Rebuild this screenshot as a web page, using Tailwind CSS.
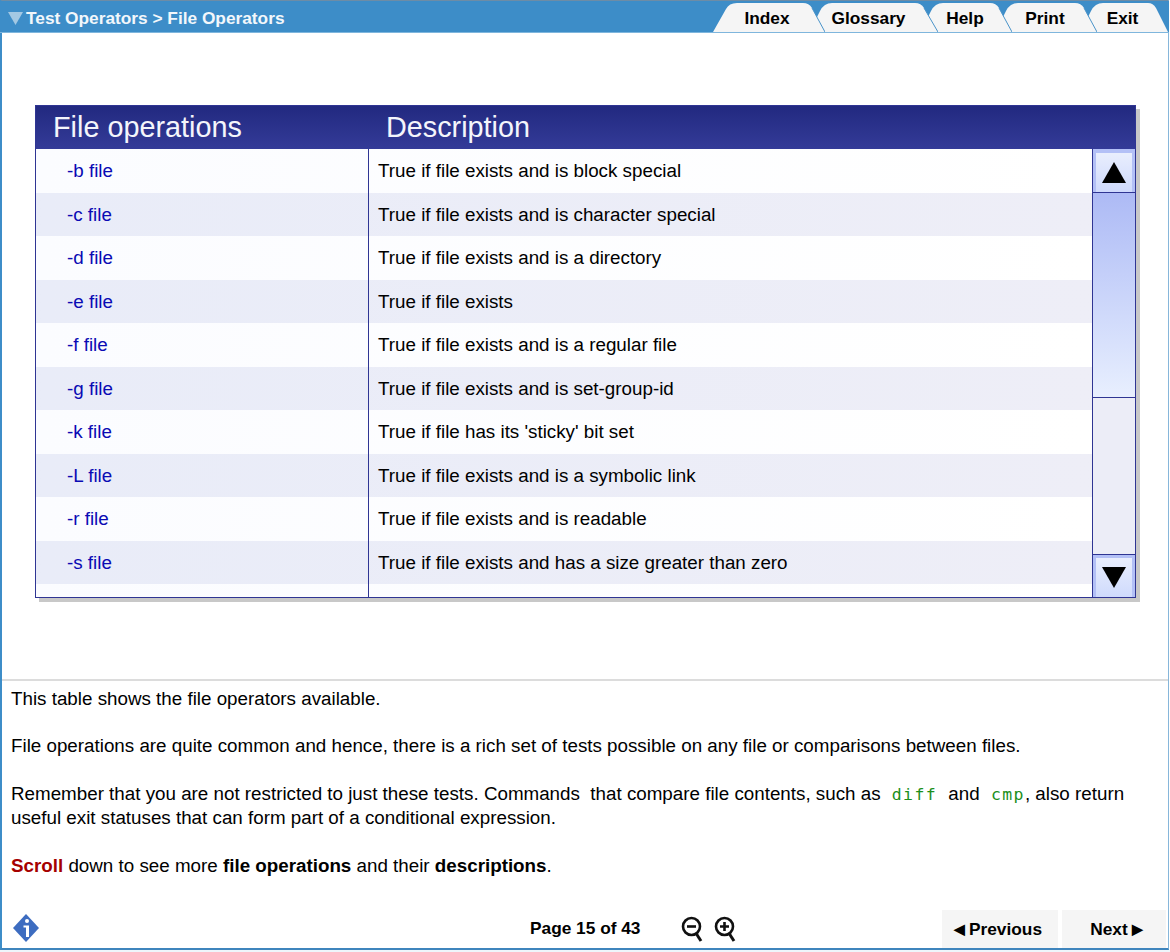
<!DOCTYPE html>
<html lang="en">

<head>
   <meta charset="UTF-8">
   <meta name="viewport" content="width=device-width, initial-scale=1.0">
   <title>File Operators</title>
   <script src="https://cdn.jsdelivr.net/npm/@tailwindcss/browser@4"></script>
</head>

<body class="bg-white font-['Liberation_Sans',Arial,sans-serif] text-black">
   <div class="w-[1170px] h-[952px] overflow-hidden">
      <div class="w-[1169px] h-[950px] flex flex-col border-l-2 border-r border-b-2 border-l-[#3d8dc8] border-r-[#86b6da] border-b-[#3f85bd] border-t border-t-[#6d8ca6]">

         <!-- top bar -->
         <div class="h-[32px] shrink-0 -ml-[2px] -mr-px bg-[#3d8dc8] border-b border-[#7fb6dd] flex items-end justify-between">
            <div class="h-full flex items-center pl-[8px] gap-[3px] pt-[4px]">
               <svg width="15" height="13" viewBox="0 0 15 13"><path d="M0 0H15L7.5 13Z" fill="#a3c8e3" /></svg>
               <span class="text-[17.3px] font-bold text-[#f2f7fb]">Test Operators &gt; File Operators</span>
            </div>
            <div class="flex h-[29px] mr-[1px] text-[17.3px] font-bold">
               <a class="relative z-50 w-[112px] flex items-center justify-center pt-[2px] pr-[4px]">
                  <svg class="absolute inset-0" width="112" height="29" viewBox="0 0 112 29"><path d="M0 29L13 6Q16 0 24 0H90Q96 0 99 5L112 29Z" fill="#f5f5f5" /><path d="M99 5L112 29" stroke="#4a93c9" stroke-width="1" fill="none" /></svg>
                  <span class="relative">Index</span>
               </a>
               <a class="relative z-40 w-[121px] -ml-[8px] flex items-center justify-center pt-[2px] pr-[18px]">
                  <svg class="absolute inset-0" width="121" height="29" viewBox="0 0 121 29"><path d="M0 29V14L3 8Q7 0 15 0H98Q104 0 107 5L121 29Z" fill="#f5f5f5" /><path d="M107 5L121 29" stroke="#4a93c9" stroke-width="1" fill="none" /></svg>
                  <span class="relative">Glossary</span>
               </a>
               <a class="relative z-30 w-[84px] -ml-[10px] flex items-center justify-center pt-[2px] pr-[10px]">
                  <svg class="absolute inset-0" width="84" height="29" viewBox="0 0 84 29"><path d="M0 29V14L3 8Q7 0 15 0H62Q68 0 71 5L84 29Z" fill="#f5f5f5" /><path d="M71 5L84 29" stroke="#4a93c9" stroke-width="1" fill="none" /></svg>
                  <span class="relative">Help</span>
               </a>
               <a class="relative z-20 w-[94px] -ml-[9px] flex items-center justify-center pt-[2px] pr-[10px]">
                  <svg class="absolute inset-0" width="94" height="29" viewBox="0 0 94 29"><path d="M0 29V14L3 8Q7 0 15 0H72Q78 0 81 5L94 29Z" fill="#f5f5f5" /><path d="M81 5L94 29" stroke="#4a93c9" stroke-width="1" fill="none" /></svg>
                  <span class="relative">Print</span>
               </a>
               <a class="relative z-10 w-[80px] -ml-[9px] flex items-center justify-center pt-[2px] pr-[11px]">
                  <svg class="absolute inset-0" width="80" height="29" viewBox="0 0 80 29"><path d="M0 29V14L3 8Q7 0 15 0H60Q65 0 68 5L80 29Z" fill="#f5f5f5" /></svg>
                  <span class="relative">Exit</span>
               </a>
            </div>
         </div>

         <!-- table area -->
         <div class="h-[648px] shrink-0 pt-[72px] pl-[33px] border-b-2 border-[#dcdcdc]">
            <div class="w-[1101px] h-[493px] flex flex-col border border-[#2f3593] shadow-[4px_4px_0_#c8c8c8]">
               <div class="h-[43px] shrink-0 flex items-center text-[28.8px] text-[#f4f5fb] bg-gradient-to-b from-[#222980] to-[#343b98]">
                  <div class="w-[333px] pl-[17px]">File operations</div>
                  <div class="pl-[17px]">Description</div>
               </div>
               <div class="flex-1 flex min-h-0">
                  <div class="w-[1056px] flex flex-col bg-gradient-to-r from-[#fbfcff] to-[#ffffff] text-[18.8px]">
                     <div class="h-[43.5px] shrink-0 flex items-center"><span class="self-stretch flex items-center w-[333px] pl-[31px] pt-[1px] text-[#0a0ab4] border-r border-[#2f3593]">-b file</span><span class="pl-[9px] pt-[1px]">True if file exists and is block special</span></div>
                     <div class="h-[43.5px] shrink-0 flex items-center bg-gradient-to-r from-[#e9ecf8] to-[#eeeef7]"><span class="self-stretch flex items-center w-[333px] pl-[31px] pt-[1px] text-[#0a0ab4] border-r border-[#2f3593]">-c file</span><span class="pl-[9px] pt-[1px]">True if file exists and is character special</span></div>
                     <div class="h-[43.5px] shrink-0 flex items-center"><span class="self-stretch flex items-center w-[333px] pl-[31px] pt-[1px] text-[#0a0ab4] border-r border-[#2f3593]">-d file</span><span class="pl-[9px] pt-[1px]">True if file exists and is a directory</span></div>
                     <div class="h-[43.5px] shrink-0 flex items-center bg-gradient-to-r from-[#e9ecf8] to-[#eeeef7]"><span class="self-stretch flex items-center w-[333px] pl-[31px] pt-[1px] text-[#0a0ab4] border-r border-[#2f3593]">-e file</span><span class="pl-[9px] pt-[1px]">True if file exists</span></div>
                     <div class="h-[43.5px] shrink-0 flex items-center"><span class="self-stretch flex items-center w-[333px] pl-[31px] pt-[1px] text-[#0a0ab4] border-r border-[#2f3593]">-f file</span><span class="pl-[9px] pt-[1px]">True if file exists and is a regular file</span></div>
                     <div class="h-[43.5px] shrink-0 flex items-center bg-gradient-to-r from-[#e9ecf8] to-[#eeeef7]"><span class="self-stretch flex items-center w-[333px] pl-[31px] pt-[1px] text-[#0a0ab4] border-r border-[#2f3593]">-g file</span><span class="pl-[9px] pt-[1px]">True if file exists and is set-group-id</span></div>
                     <div class="h-[43.5px] shrink-0 flex items-center"><span class="self-stretch flex items-center w-[333px] pl-[31px] pt-[1px] text-[#0a0ab4] border-r border-[#2f3593]">-k file</span><span class="pl-[9px] pt-[1px]">True if file has its 'sticky' bit set</span></div>
                     <div class="h-[43.5px] shrink-0 flex items-center bg-gradient-to-r from-[#e9ecf8] to-[#eeeef7]"><span class="self-stretch flex items-center w-[333px] pl-[31px] pt-[1px] text-[#0a0ab4] border-r border-[#2f3593]">-L file</span><span class="pl-[9px] pt-[1px]">True if file exists and is a symbolic link</span></div>
                     <div class="h-[43.5px] shrink-0 flex items-center"><span class="self-stretch flex items-center w-[333px] pl-[31px] pt-[1px] text-[#0a0ab4] border-r border-[#2f3593]">-r file</span><span class="pl-[9px] pt-[1px]">True if file exists and is readable</span></div>
                     <div class="h-[43.5px] shrink-0 flex items-center bg-gradient-to-r from-[#e9ecf8] to-[#eeeef7]"><span class="self-stretch flex items-center w-[333px] pl-[31px] pt-[1px] text-[#0a0ab4] border-r border-[#2f3593]">-s file</span><span class="pl-[9px] pt-[1px]">True if file exists and has a size greater than zero</span></div>
                     <div class="flex-1 w-[333px] border-r border-[#2f3593]"></div>
                  </div>
                  <!-- scrollbar -->
                  <div class="w-[43px] flex flex-col border-l border-[#2f3593] bg-[#ecedf7]">
                     <div class="h-[44px] shrink-0 bg-[#b3c0f6] border-b border-[#2f3593] pt-[4px] px-[3px]">
                        <div class="h-[39px] flex items-center justify-center bg-gradient-to-b from-[#e9eefd] to-[#cfdafc]">
                           <svg width="24" height="21" viewBox="0 0 24 21"><path d="M12 0L24 21H0Z" fill="#000" /></svg>
                        </div>
                     </div>
                     <div class="h-[205px] shrink-0 bg-gradient-to-b from-[#adbaf5] to-[#e8effe] border-b border-[#2f3593]"></div>
                     <div class="flex-1"></div>
                     <div class="h-[43px] shrink-0 bg-[#b3c0f6] border-t border-[#2f3593] pt-[3px] px-[3px]">
                        <div class="h-[39px] flex items-center justify-center bg-gradient-to-b from-[#e9eefd] to-[#cfdafc]">
                           <svg width="24" height="21" viewBox="0 0 24 21"><path d="M12 21L0 0H24Z" fill="#000" /></svg>
                        </div>
                     </div>
                  </div>
               </div>
            </div>
         </div>

         <!-- explanation -->
         <div class="h-[226px] shrink-0 pl-[9px] pt-[6px] pr-[20px] text-[18.8px] leading-[23.7px]">
            <p>This table shows the file operators available.</p>
            <p class="mt-[23.7px]">File operations are quite common and hence, there is a rich set of tests possible on any file or comparisons between files.</p>
            <p class="mt-[23.7px]">Remember that you are not restricted to just these tests. Commands &nbsp;that compare file contents, such as <code class="font-['DejaVu_Sans_Mono',monospace] text-[16.5px] tracking-[1.4px] text-[#1b8f1b] mx-[6px]">diff</code> and <code class="font-['DejaVu_Sans_Mono',monospace] text-[16.5px] tracking-[1.4px] text-[#1b8f1b] ml-[6px]">cmp</code>, also return useful exit statuses that can form part of a conditional expression.</p>
            <p class="mt-[23.7px]"><b class="text-[#a50000]">Scroll</b> down to see more <b>file operations</b> and their <b>descriptions</b>.</p>
         </div>

         <!-- footer -->
         <div class="flex-1 flex items-end relative">
            <svg class="absolute left-[11px] bottom-[6px]" width="26" height="28" viewBox="0 0 26 28">
               <path d="M13 0L26 14L13 28L0 14Z" fill="#3d6cc0" />
               <circle cx="14" cy="7" r="2" fill="#fff" />
               <path d="M10.500 11.500H16V23H13V13.500H10.500Z" fill="#fff" />
            </svg>
            <div class="absolute left-[528px] bottom-[6px] text-[17.3px] font-bold">Page 15 of 43</div>
            <div class="absolute left-[679px] bottom-[4px] flex gap-[9px]">
               <svg width="24" height="28" viewBox="0 0 24 28" fill="none" stroke="#111" stroke-width="2.6">
                  <circle cx="10.500" cy="10.500" r="8.500" />
                  <path d="M6 10.500H15" />
                  <path d="M15.500 18L20 25" stroke-width="3" />
               </svg>
               <svg width="24" height="28" viewBox="0 0 24 28" fill="none" stroke="#111" stroke-width="2.6">
                  <circle cx="10.500" cy="10.500" r="8.500" />
                  <path d="M6 10.500H15M10.500 6V15" />
                  <path d="M15.500 18L20 25" stroke-width="3" />
               </svg>
            </div>
            <div class="absolute right-[2px] bottom-0 flex gap-[4px] text-[17.3px] font-bold">
               <div class="w-[116px] h-[38px] bg-[#f5f5f5] flex items-center justify-center pt-[1px] pr-[4px]"><span class="text-[14px] mr-[4px]">◀</span>Previous</div>
               <div class="w-[104px] h-[38px] bg-[#f5f5f5] flex items-center justify-center pt-[1px] pl-[5px]">Next<span class="text-[14px] ml-[4px]">▶</span></div>
            </div>
         </div>
      </div>
      <div class="h-[2px] bg-[#eef6fb]"></div>
   </div>
</body>

</html>
